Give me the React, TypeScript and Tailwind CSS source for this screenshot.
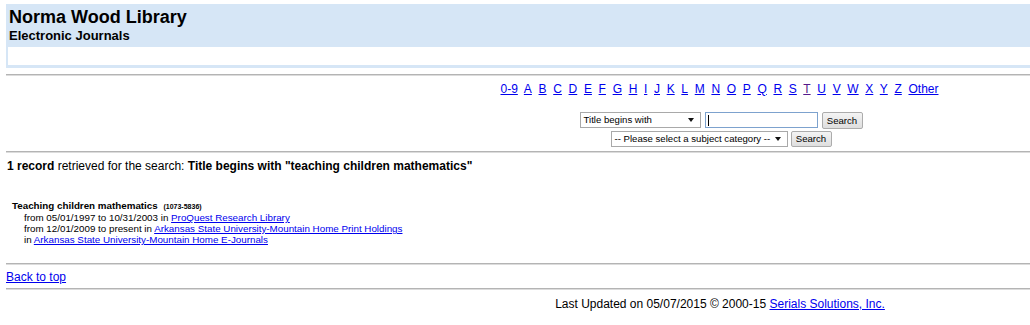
import React from 'react';

const letters = ['0-9', 'A', 'B', 'C', 'D', 'E', 'F', 'G', 'H', 'I', 'J', 'K', 'L', 'M', 'N', 'O', 'P', 'Q', 'R', 'S', 'T', 'U', 'V', 'W', 'X', 'Y', 'Z', 'Other'];

const holdings = [
  { prefix: 'from 05/01/1997 to 10/31/2003 in ', name: 'ProQuest Research Library' },
  { prefix: 'from 12/01/2009 to present in ', name: 'Arkansas State University-Mountain Home Print Holdings' },
  { prefix: 'in ', name: 'Arkansas State University-Mountain Home E-Journals' },
];

const Rule = ({ className = '' }: { className?: string }) => (
  <div className={`ml-[6px] h-[2px] border-t border-t-[#b4b4b4] border-b border-b-[#dcdcdc] ${className}`} />
);

const FakeSelect = ({ label, width }: { label: string; width: string }) => (
  <div className={`flex items-center justify-between h-full border border-[#a9a9a9] bg-white pl-[3px] pr-[6px] text-[9.6px] text-black whitespace-nowrap overflow-hidden ${width}`}>
    <span className="leading-none">{label}</span>
    <svg width="6" height="4" viewBox="0 0 6 4" className="shrink-0">
      <path d="M0 0 L6 0 L3 4 Z" fill="#111" />
    </svg>
  </div>
);

const SearchButton = () => (
  <button
    type="button"
    className="h-full w-[41px] rounded-[2px] border border-[#acacac] bg-gradient-to-b from-[#f4f4f4] to-[#dedede] text-[9.6px] leading-none text-black"
  >
    Search
  </button>
);

const App: React.FC = () => {
  return (
    <div className="w-[1030px] h-[325px] overflow-hidden bg-white text-black font-['Liberation_Sans',Arial,sans-serif]">
      <div className="w-[1440px]">
        {/* header */}
        <div className="mt-[4px] ml-[6px] bg-[#d6e6f6] pl-[2px] pb-[3px]">
          <div className="pl-px pt-[3px] pb-[4px]">
            <h1 className="text-[18px] leading-[21px] font-bold">Norma Wood Library</h1>
            <h2 className="text-[13px] leading-[15px] font-bold">Electronic Journals</h2>
          </div>
          <div className="h-[18px] bg-white" />
        </div>

        <Rule className="mt-[6px]" />

        {/* alphabet */}
        <div className="mt-[6px] pr-[1px] text-center text-[12px] leading-[14px]">
          {letters.map((l, i) => (
            <React.Fragment key={l}>
              <a href="#" className={`underline ${l === 'T' ? 'text-[#551a8b]' : 'text-[#0000ee]'}`}>
                {l}
              </a>
              {i < letters.length - 1 && '\u00a0 '}
            </React.Fragment>
          ))}
        </div>

        {/* search form */}
        <div className="mt-[16px] flex flex-col items-center">
          <div className="flex h-[17px] gap-[4px] pl-[2px]">
            <div className="h-[16px]">
              <FakeSelect label="Title begins with" width="w-[121px]" />
            </div>
            <div className="relative h-[16px] w-[113px] border border-[#7da2ce] bg-white">
              <span className="absolute left-[2px] top-[2px] h-[11px] w-px bg-black" />
            </div>
            <SearchButton />
          </div>
          <div className="mt-[2px] flex h-[16px] gap-[3px] pl-[2px]">
            <FakeSelect label="-- Please select a subject category --" width="w-[177px]" />
            <SearchButton />
          </div>
        </div>

        <Rule className="mt-[4px]" />

        {/* result summary */}
        <p className="mt-[6px] ml-[7px] text-[12px] leading-[14px]">
          <b>1 record</b> retrieved for the search: <b>Title begins with "teaching children mathematics"</b>
        </p>

        {/* result list */}
        <div className="mt-[27px] ml-[12px] text-[9.8px] leading-[11px]">
          <div>
            <b>Teaching children mathematics</b>{' '}
            <b className="ml-[3px] text-[7px]">(1073-5836)</b>
          </div>
          {holdings.map((h) => (
            <div key={h.name} className="pl-[12px]">
              {h.prefix}
              <a href="#" className="text-[#0000ee] underline">
                {h.name}
              </a>
            </div>
          ))}
        </div>

        <Rule className="mt-[18px]" />

        <div className="mt-[5px] ml-[6px] text-[12px] leading-[14px]">
          <a href="#" className="text-[#0000ee] underline">
            Back to top
          </a>
        </div>

        <Rule className="mt-[4px]" />

        <p className="mt-[7px] text-center text-[12px] leading-[14px]">
          Last Updated on 05/07/2015 © 2000-15{' '}
          <a href="#" className="text-[#0000ee] underline">
            Serials Solutions, Inc.
          </a>
        </p>
      </div>
    </div>
  );
};

export default App;
